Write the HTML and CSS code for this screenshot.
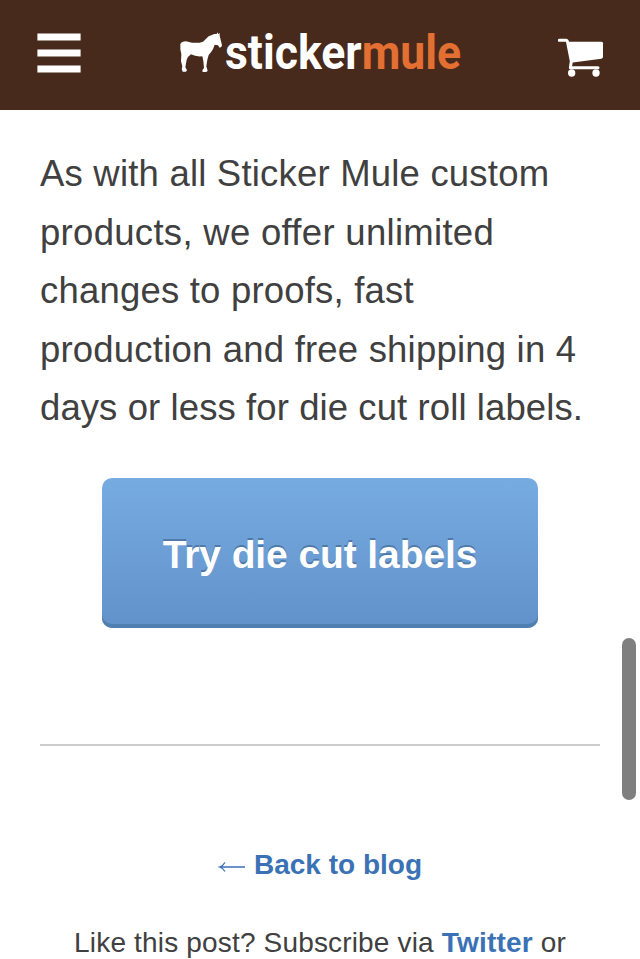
FILE: index.html
```html
<!DOCTYPE html>
<html lang="en"><head><meta charset="utf-8"><title>Sticker Mule</title><link rel="stylesheet" href="styles.css"></head>
<body>
<header class="header">
<svg class="menu" viewBox="0 0 44 40"><path d="M.4.4h43.2v7.2H.4zM.4 16.4h43.2v7.2H.4zM.4 32.4h43.2v7.2H.4z" fill="#fff"/></svg>
<svg class="logo" viewBox="170 20 300 65">
<path transform="translate(177 29) scale(.33333)" fill="#fff" d="M10 45Q14 37 27 37L45 41Q65 43 78 38L95 22L112 15L119 15L121 10L124 16L128 11L128 20L135 49Q134 56 128 56L123 49L113 47Q109 60 103 68L95 78L91 92L88 112L92 125L88 129H77L76 124L81 117L79 96L76 82Q56 84 42 76Q33 82 29 92L25 115L30 123L27 128H17L14 120L16 113L12 96L13 76L10 61Z"/>
<text class="word" x="225" y="69" textLength="236" lengthAdjust="spacingAndGlyphs">sticker<tspan class="accent">mule</tspan></text>
</svg>
<svg class="cart" viewBox="53 55 137 117"><path d="M57 62H77Q81 62 82 69L93 125L90 144H173" fill="none" stroke="#fff" stroke-width="9" stroke-linecap="round" stroke-linejoin="round"/><path fill="#fff" d="M81 66H184Q188 66 188 71V111Q188 116 183 117L92 129Z"/><circle cx="94" cy="160" r="11" fill="#fff"/><circle cx="167" cy="160" r="11" fill="#fff"/></svg>
</header>
<main class="content">
<p class="copy"><span class="line">As with all Sticker Mule custom</span><span class="line wide">products, we offer unlimited</span><span class="line">changes to proofs, fast</span><span class="line">production and free shipping in 4</span><span class="line tight">days or less for die cut roll labels.</span></p>
<a class="button">Try die cut labels</a>
<hr class="rule">
<p class="back"><svg class="arrow" viewBox="0 0 28 14"><path d="M2 7H27M7 2.500Q5 6 1.500 7Q5 8 7 11.500" fill="none" stroke="#3a72b5" stroke-width="1.300"/></svg><b>Back to blog</b></p>
<p class="subscribe">Like this post? Subscribe via <b>Twitter</b> or</p>
</main>
<div class="scrollbar"></div>
</body></html>
```
FILE: styles.css
```css
*{box-sizing:border-box}
body{margin:0;height:959px;overflow:hidden;background:#fff;color:#404040;font-family:"Liberation Sans",Arial,sans-serif}
.header{height:110px;background:#482a1c;display:flex;align-items:flex-start;padding:0 36px 0 37px}
.menu{width:44px;height:40px;margin-top:33px}
.logo{width:300px;height:65px;margin:20px 0 0 89px}
.word{font:bold 49px Roboto,sans-serif;fill:#fff}
.accent{fill:#e36f32}
.cart{width:45.700px;height:39px;margin:38px 0 0 88px;flex:none}
.content{padding:35px 40px 0}
.copy{margin:0;font-size:36.500px;line-height:58.5px}
.line{display:block;white-space:nowrap;letter-spacing:.200px}
.wide{letter-spacing:.300px}
.tight{letter-spacing:.090px}
.button{display:block;width:436px;height:150px;margin:40px auto 0;border-radius:10px;background:linear-gradient(#76abe1,#6292ca);box-shadow:inset 0 -4px #507fb1;color:#fff;font-size:39px;letter-spacing:-.1px;font-weight:bold;line-height:154px;text-align:center;text-shadow:0 -2px #507aa8}
.rule{height:2px;border:0;background:#ccc;margin:116px 0 0}
.back,.subscribe{margin:0;font-size:28px;line-height:40px;text-align:center;white-space:nowrap}
.back{margin-top:99px;color:#3a72b5;display:flex;align-items:center;justify-content:center}
.arrow{width:28px;height:14px;margin:4px 8px 0 0}
.subscribe{margin-top:38px;letter-spacing:.17px}
b{color:#3a72b5}
.scrollbar{position:absolute;right:4px;top:638px;width:14px;height:162px;border-radius:7px;background:#7f7f7f}
```
